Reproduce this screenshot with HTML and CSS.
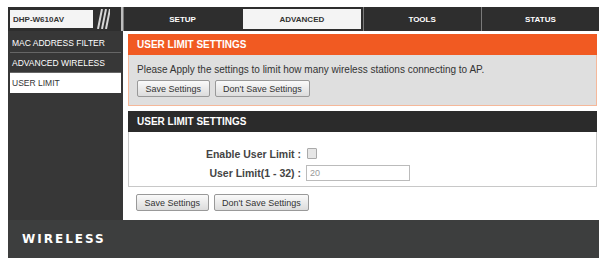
FILE: index.html
```html
<!DOCTYPE html>
<html lang="en">
<head>
    <meta charset="UTF-8">
    <meta name="viewport" content="width=device-width, initial-scale=1.0">
    <title>User Limit</title>
    <link rel="stylesheet" href="styles.css">
</head>
<body>
    <div class="page">
        <div class="topbar">
            <div class="logo">
                <span class="model">DHP-W610AV</span>
                <svg class="slashes" width="16" height="20" viewBox="0 0 16 20">
                    <path d="M4 20 L8 0 M8 20 L12 0 M12 20 L16 0" stroke="#d6d6d6" stroke-width="2" fill="none"/>
                </svg>
            </div>
            <div class="tab">SETUP</div>
            <div class="tab active">ADVANCED</div>
            <div class="tab">TOOLS</div>
            <div class="tab">STATUS</div>
        </div>

        <div class="middle">
            <div class="sidebar">
                <div class="side-item">MAC ADDRESS FILTER</div>
                <div class="side-item">ADVANCED WIRELESS</div>
                <div class="side-item current">USER LIMIT</div>
            </div>

            <div class="content">
                <div class="box box-orange">
                    <div class="box-head">USER LIMIT SETTINGS</div>
                    <div class="box-body">
                        <p>Please Apply the settings to limit how many wireless stations connecting to AP.</p>
                        <div class="buttons">
                            <button>Save Settings</button>
                            <button>Don't Save Settings</button>
                        </div>
                    </div>
                </div>

                <div class="box box-dark">
                    <div class="box-head">USER LIMIT SETTINGS</div>
                    <div class="box-body">
                        <div class="form-row">
                            <label>Enable User Limit :</label>
                            <input type="checkbox" class="check">
                        </div>
                        <div class="form-row">
                            <label>User Limit(1 - 32) :</label>
                            <input type="text" class="field" value="20">
                        </div>
                    </div>
                </div>

                <div class="buttons bottom">
                    <button>Save Settings</button>
                    <button>Don't Save Settings</button>
                </div>
            </div>
        </div>

        <div class="footer">WIRELESS</div>
    </div>
</body>
</html>
```

FILE: styles.css
```css
* {
  box-sizing: border-box;
}

body {
  margin: 0;
  font-family: "Liberation Sans", Arial, sans-serif;
  background-color: #fff;
  color: #333;
}

.page {
  margin: 7px 2px 0 8px;
}

.topbar {
  display: flex;
  height: 24px;
  background-color: #2e2e2e;
}

.logo {
  width: 115px;
  display: flex;
  align-items: center;
  padding-left: 2px;
  border-right: 2px solid #bdbdbd;
}

.model {
  display: flex;
  align-items: center;
  width: 83px;
  height: 18px;
  padding-left: 3px;
  background-color: #f4f4f4;
  color: #333;
  font-size: 8px;
  font-weight: bold;
}

.slashes {
  margin-left: 1px;
}

.tab {
  flex: 1;
  display: flex;
  align-items: center;
  justify-content: center;
  color: #fff;
  font-size: 8px;
  font-weight: bold;
  border-left: 1px solid #7a7a7a;
}

.tab:first-of-type {
  border-left: none;
}

.tab.active {
  background-color: #f4f4f4;
  color: #333;
  border: 2px solid #2e2e2e;
}

.middle {
  display: flex;
  height: 189px;
}

.sidebar {
  width: 115px;
  background-color: #373737;
  padding: 2px 2px 0 2px;
}

.side-item {
  height: 20px;
  display: flex;
  align-items: center;
  padding-left: 2px;
  color: #fff;
  font-size: 8.5px;
  border-bottom: 1px solid #666;
}

.side-item.current {
  background-color: #fff;
  color: #333;
  border-bottom: none;
}

.content {
  flex: 1;
  padding: 3px 2px 0 5px;
}

.box {
  margin-bottom: 5px;
}

.box-head {
  height: 21px;
  display: flex;
  align-items: center;
  padding-left: 9px;
  color: #fff;
  font-size: 10px;
  font-weight: bold;
}

.box-orange .box-head {
  background-color: #f15a22;
}

.box-orange .box-body {
  background-color: #dfdfdf;
  border: 1px solid #f5b89a;
  border-top: none;
  padding: 9px 8px 8px 8px;
}

.box-orange p {
  margin: 0 0 5px 0;
  font-size: 10px;
  color: #333;
}

.box-dark .box-head {
  background-color: #2b2b2b;
}

.box-dark .box-body {
  background-color: #fff;
  border: 1px solid #c8c8c8;
  border-top: none;
  height: 55px;
  padding-top: 12px;
}

.form-row {
  display: flex;
  align-items: center;
  height: 19px;
}

.form-row label {
  width: 176px;
  text-align: right;
  padding-right: 4px;
  font-size: 10.5px;
  font-weight: bold;
  color: #444;
}

.check {
  appearance: none;
  margin: 0 0 0 2px;
  width: 10px;
  height: 11px;
  background-color: #e6e6e6;
  border: 1px solid #aaa;
  border-radius: 1px;
}

.field {
  margin-left: 1px;
  width: 104px;
  height: 16px;
  border: 1px solid #bbb;
  padding: 0 3px;
  font-family: "Liberation Sans", Arial, sans-serif;
  font-size: 9px;
  color: #999;
}

.buttons {
  display: flex;
  gap: 5px;
}

.buttons.bottom {
  margin-top: 7px;
  padding-left: 8px;
}

button {
  height: 17px;
  padding: 0 7.5px;
  font-family: "Liberation Sans", Arial, sans-serif;
  font-size: 9px;
  color: #333;
  background: linear-gradient(#fafafa, #dcdcdc);
  border: 1px solid #999;
  border-radius: 2px;
}

.footer {
  height: 38px;
  background-color: #3d3e3e;
  display: flex;
  align-items: center;
  padding-left: 14px;
  color: #fff;
  font-family: "DejaVu Sans", sans-serif;
  font-size: 12px;
  font-weight: bold;
  letter-spacing: 2px;
}
```
